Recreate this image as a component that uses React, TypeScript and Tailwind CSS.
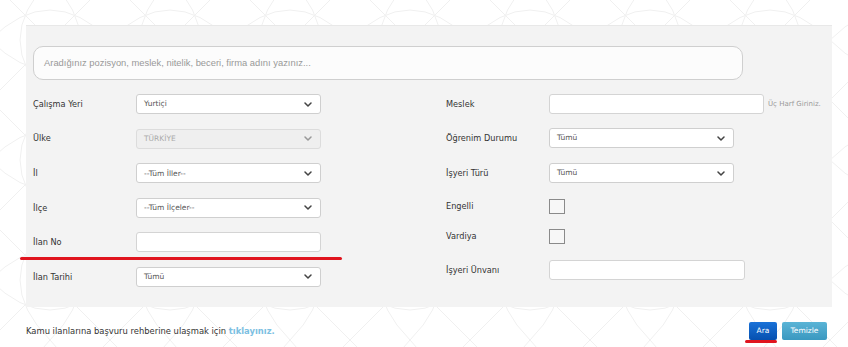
import type { ReactNode } from "react";

const LABEL = "text-[8.2px] text-[#333] [font-family:'DejaVu_Sans',Verdana,sans-serif]";
const CTRL = "text-[7.5px] text-[#555] [font-family:'DejaVu_Sans',Verdana,sans-serif]";

function Chevron({ muted }: { muted?: boolean }) {
  return (
    <svg width="8" height="5" viewBox="0 0 8 5" className="shrink-0">
      <polyline
        points="1,1 4,4 7,1"
        fill="none"
        stroke={muted ? "#999" : "#444"}
        strokeWidth="1.5"
        strokeLinecap="round"
        strokeLinejoin="round"
      />
    </svg>
  );
}

function Select({ value, width = "w-[185px]", disabled }: { value: string; width?: string; disabled?: boolean }) {
  return (
    <div
      className={`${width} h-[20px] rounded-[3px] border flex items-center justify-between pl-[7px] pr-[8px] ${
        disabled ? "bg-[#efefef] border-[#dcdcdc]" : "bg-white border-[#cfcfcf]"
      }`}
    >
      <span className={`${CTRL} ${disabled ? "text-[#aaa]" : ""}`}>{value}</span>
      <Chevron muted={disabled} />
    </div>
  );
}

function TextBox({ width }: { width: string }) {
  return <div className={`${width} h-[20px] rounded-[3px] border border-[#d4d4d4] bg-white`} />;
}

function CheckBox() {
  return <div className="w-[16px] h-[15px] border border-[#8a8a8a] bg-[#f7f7f7]" />;
}

function Row({ label, children, className = "" }: { label: string; children: ReactNode; className?: string }) {
  return (
    <div className={`flex items-center h-[20px] ${className}`}>
      <span className={`${LABEL} w-[103px] shrink-0`}>{label}</span>
      {children}
    </div>
  );
}

function Pattern() {
  return (
    <svg width="848" height="347" className="absolute inset-0 pointer-events-none">
      <defs>
        <pattern id="geo" width="120" height="120" patternUnits="userSpaceOnUse" x="-10" y="-20">
          <g fill="none" stroke="#f0f0f0" strokeWidth="1">
            <path d="M0 60 Q60 0 120 60 Q60 120 0 60Z" />
            <path d="M60 0 Q0 60 60 120 Q120 60 60 0Z" />
            <path d="M0 0 L120 120 M120 0 L0 120" />
          </g>
        </pattern>
      </defs>
      <rect width="848" height="347" fill="url(#geo)" />
    </svg>
  );
}

export default function App() {
  return (
    <div className="relative w-[848px] h-[347px] bg-white overflow-hidden">
      <Pattern />
      <div className="relative pt-[25px] pl-[26px]">
        <div className="w-[806px] h-[282px] bg-[#f3f3f3] border-t border-[#e8e8e8] pl-[7px] pt-[20px]">
          <div className="w-[710px] h-[34px] rounded-[10px] border border-[#cfcfcf] bg-[#fcfcfc] flex items-center pl-[10px]">
            <span className="text-[9.4px] text-[#999] [font-family:'Liberation_Sans',Arial,sans-serif]">
              Aradığınız pozisyon, meslek, nitelik, beceri, firma adını yazınız...
            </span>
          </div>

          <div className="flex mt-[14px]">
            <div className="w-[413px] flex flex-col gap-[14.6px]">
              <Row label="Çalışma Yeri"><Select value="Yurtiçi" /></Row>
              <Row label="Ülke"><Select value="TÜRKİYE" disabled /></Row>
              <Row label="İl"><Select value="--Tüm İller--" /></Row>
              <Row label="İlçe"><Select value="--Tüm İlçeler--" /></Row>
              <Row label="İlan No"><TextBox width="w-[185px]" /></Row>
              <Row label="İlan Tarihi"><Select value="Tümü" /></Row>
            </div>

            <div className="flex flex-col">
              <Row label="Meslek">
                <TextBox width="w-[215px]" />
                <span className="ml-[4px] text-[7px] text-[#999] [font-family:'DejaVu_Sans',Verdana,sans-serif]">Üç Harf Giriniz.</span>
              </Row>
              <Row label="Öğrenim Durumu" className="mt-[14px]"><Select value="Tümü" /></Row>
              <Row label="İşyeri Türü" className="mt-[15px]"><Select value="Tümü" /></Row>
              <Row label="Engelli" className="mt-[13px]"><CheckBox /></Row>
              <Row label="Vardiya" className="mt-[10px]"><CheckBox /></Row>
              <Row label="İşyeri Ünvanı" className="mt-[14px]"><TextBox width="w-[196px]" /></Row>
            </div>
          </div>
        </div>

        <div className="w-[806px] flex items-center justify-between mt-[15px]">
          <p className="text-[8.4px] text-[#333] [font-family:'DejaVu_Sans',Verdana,sans-serif]">
            Kamu ilanlarına başvuru rehberine ulaşmak için{" "}
            <span className="font-bold text-[#7cc0e2]">tıklayınız.</span>
          </p>
          <div className="flex gap-[5px] pr-[5px]">
            <div className="w-[28px] h-[18px] rounded-[2px] bg-gradient-to-b from-[#1a72d8] to-[#0650b0] flex items-center justify-center text-white text-[7.5px] [font-family:'DejaVu_Sans',Verdana,sans-serif]">
              Ara
            </div>
            <div className="w-[45px] h-[18px] rounded-[2px] bg-gradient-to-b from-[#5ab4d6] to-[#3a98c0] flex items-center justify-center text-white text-[7.5px] [font-family:'DejaVu_Sans',Verdana,sans-serif]">
              Temizle
            </div>
          </div>
        </div>
      </div>

      {/* red annotation strokes */}
      <div className="absolute left-[20px] top-[257px] w-[322px] h-[3px] rounded-full bg-[#e0141e]" />
      <div className="absolute left-[745px] top-[340px] w-[32px] h-[3px] rounded-full bg-[#e0141e]" />
    </div>
  );
}
